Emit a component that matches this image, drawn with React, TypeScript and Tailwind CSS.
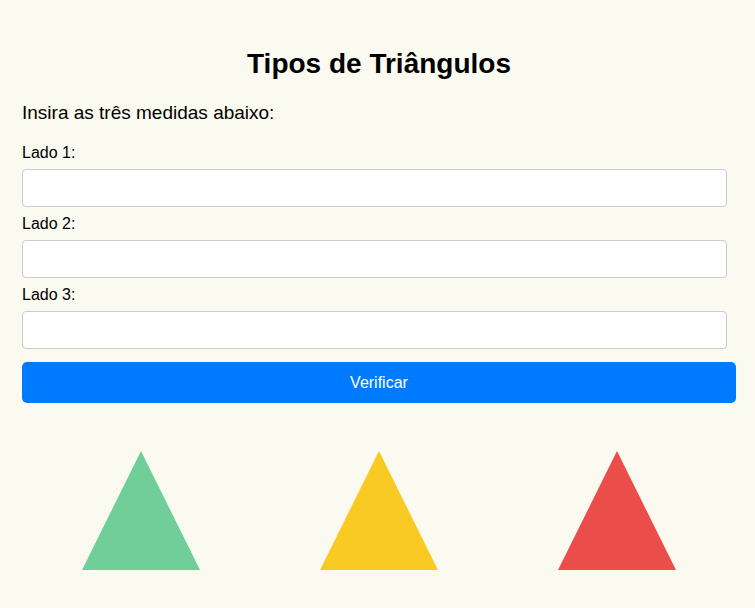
import React from "react";

const TRIANGLES = ["#70cf98", "#f9ca24", "#eb4d4b"];

function Triangle({ color }: { color: string }) {
  return (
    <svg width="118" height="119" viewBox="0 0 118 119">
      <polygon points="59,0 118,119 0,119" fill={color} />
    </svg>
  );
}

export default function App() {
  const fields = ["Lado 1:", "Lado 2:", "Lado 3:"];

  return (
    <div className="min-h-screen bg-[#fafaf1] text-black font-['Liberation_Sans',Arial,sans-serif]">
      <div className="pl-[22px] pr-[19px] pt-[48px]">
        <h1 className="text-[28px] font-bold leading-[32px] text-center">Tipos de Triângulos</h1>
        <p className="mt-[22px] text-[19px] leading-[22px]">Insira as três medidas abaixo:</p>

        <form className="mt-[20px]" onSubmit={(e) => e.preventDefault()}>
          {fields.map((f) => (
            <div key={f}>
              <label className="block text-[16px] leading-[18px]">{f}</label>
              <input
                type="text"
                className="block w-[705px] h-[38px] mt-[7px] mb-[8px] px-2 bg-white border border-[#cccccc] rounded-[4px] outline-none"
              />
            </div>
          ))}
          <button
            type="submit"
            className="block w-full h-[41px] mt-[13px] bg-[#007bff] text-white text-[16px] rounded-[5px]"
          >
            Verificar
          </button>
        </form>

        {/* Triangles */}
        <div className="grid grid-cols-3 mt-[48px]">
          {TRIANGLES.map((c) => (
            <div key={c} className="flex justify-center">
              <Triangle color={c} />
            </div>
          ))}
        </div>
      </div>
    </div>
  );
}
